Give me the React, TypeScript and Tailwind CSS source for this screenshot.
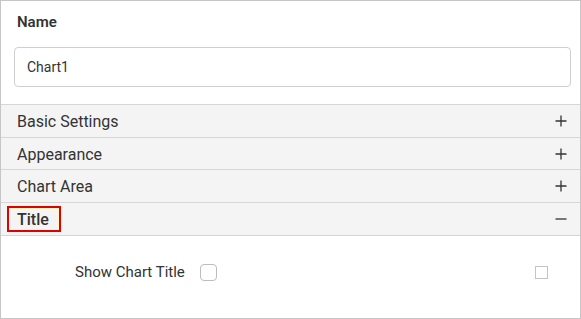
import React from "react"

const PlusIcon = () => (
    <svg width="12" height="12" viewBox="0 0 12 12" className="text-[#333]">
        <path d="M6 0.5V11.5M0.5 6H11.5" stroke="currentColor" strokeWidth="1.3" />
    </svg>
)

const MinusIcon = () => (
    <svg width="12" height="12" viewBox="0 0 12 12" className="text-[#333]">
        <path d="M0.5 6H11.5" stroke="currentColor" strokeWidth="1.3" />
    </svg>
)

const Row = (props: { label: string; short?: boolean }) => {
    return (
        <div
            className={
                props.short
                    ? "flex items-center justify-between h-[32px] bg-[#f4f4f4] border-b border-[#d6d6d6] pl-4 pr-[13px]"
                    : "flex items-center justify-between h-[33px] bg-[#f4f4f4] border-b border-[#d6d6d6] pl-4 pr-[13px]"
            }
        >
            <span className="pt-[2px] text-[16px] text-[#333]">{props.label}</span>
            <PlusIcon />
        </div>
    )
}

const App = () => {
    return (
        <div
            className="w-[581px] h-[319px] bg-white border border-[#c6c6c6] flex flex-col"
            style={{ fontFamily: "Roboto, 'Liberation Sans', sans-serif" }}
        >
            {/* name field */}
            <div className="pt-[11px] pl-4 text-[15px] leading-5 font-semibold text-[#333]">Name</div>
            <div className="mt-[15px] ml-[13px] mr-[9px] h-[40px] border border-[#cfcfcf] rounded-[4px] flex items-center pl-[12px] text-[14px] text-[#333]">
                Chart1
            </div>

            {/* accordion */}
            <div className="mt-[17px] border-t border-[#d6d6d6]">
                <Row label="Basic Settings" />
                <Row label="Appearance" short />
                <Row label="Chart Area" />
                <div className="flex items-center justify-between h-[33px] bg-[#f4f4f4] border-b border-[#d6d6d6] pl-[6px] pr-[13px]">
                    <span className="h-[26px] flex items-center border-2 border-[#e00000] pl-[8px] pr-[10px] pt-[1px] text-[16px] font-medium text-[#333] shadow-[inset_0_0_0_1px_#fff9c4]">
                        Title
                    </span>
                    <MinusIcon />
                </div>
            </div>

            {/* title options */}
            <div className="flex items-center mt-[25px] pl-[74px] pr-[32px]">
                <span className="text-[15px] text-[#333]">Show Chart Title</span>
                <span className="ml-[15px] w-[17px] h-[17px] rounded-[4px] border border-[#bdbdbd]"></span>
                <span className="ml-auto w-[13px] h-[13px] border border-[#c4c4c4]"></span>
            </div>
        </div>
    )
}

export default App
